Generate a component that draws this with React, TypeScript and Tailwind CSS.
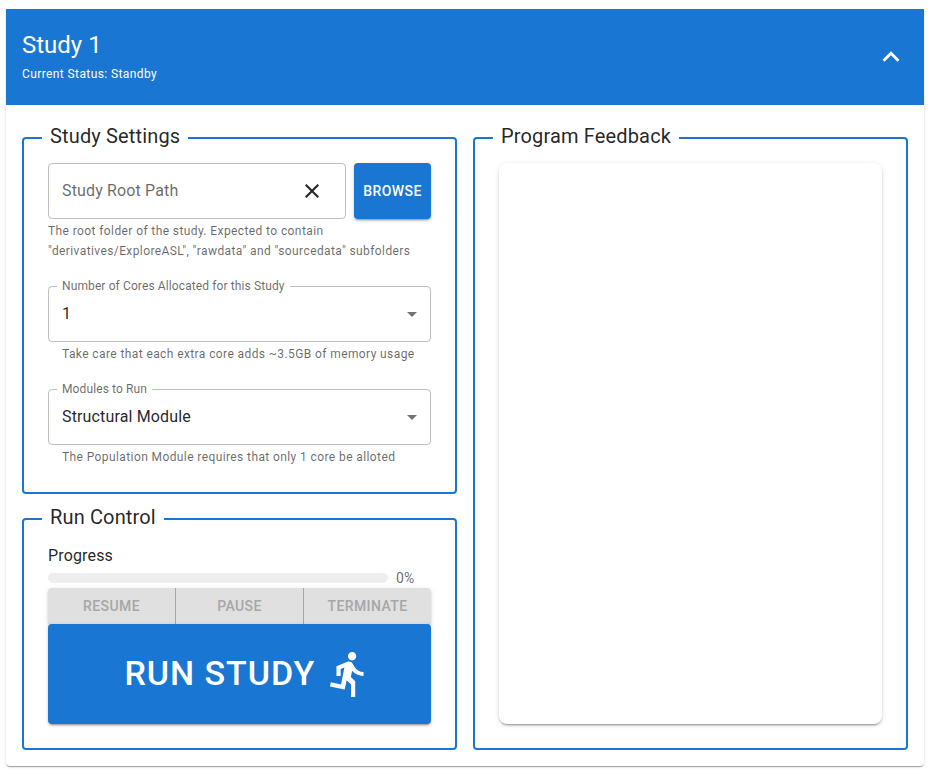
import type { ReactNode } from "react";
import { MdClose, MdDirectionsRun, MdExpandLess, MdArrowDropDown } from "react-icons/md";

function Section({ title, className, children }: { title: string; className: string; children: ReactNode }) {
  return (
    <fieldset className={`min-w-0 rounded border-2 border-[#1976d2] px-6 ${className}`}>
      <legend className="-ml-1.5 h-8 px-2 text-xl leading-7 tracking-[0.0075em]">{title}</legend>
      {children}
    </fieldset>
  );
}

function SelectField({ label, value, hint }: { label: string; value: string; hint: string }) {
  return (
    <div>
      <fieldset className="h-[66px] min-w-0 rounded border border-black/25 pr-1.5 pl-2">
        <legend className="h-5 pr-[5.2px] pl-[5px] text-xs leading-5 tracking-[0.00938em] text-black/60">{label}</legend>
        <div className="flex h-9 items-center justify-between pl-[5px]">
          <span className="text-base leading-6 tracking-[0.00938em]">{value}</span>
          <MdArrowDropDown className="size-6 text-black/55" />
        </div>
      </fieldset>
      <p className="mt-0.5 pl-3.5 text-xs leading-5 tracking-[0.03333em] text-black/60">{hint}</p>
    </div>
  );
}

const buttonText = "text-sm font-medium tracking-[0.02857em]";
const raised = "shadow-[0_3px_1px_-2px_rgba(0,0,0,0.2),0_2px_2px_0_rgba(0,0,0,0.14),0_1px_5px_0_rgba(0,0,0,0.12)]";
const paper = "shadow-[0_2px_1px_-1px_rgba(0,0,0,0.2),0_1px_1px_0_rgba(0,0,0,0.14),0_1px_3px_0_rgba(0,0,0,0.12)]";

export default function App() {
  return (
    <main className="h-[774px] w-[935px] bg-white pt-[9px] pl-1.5 font-[Roboto,sans-serif] text-black/87">
      <div className={`h-[757px] w-[918px] rounded-b ${paper}`}>
        <header className="flex h-24 items-center justify-between bg-[#1976d2] px-4 text-white">
          <div className="pb-0.5">
            <h1 className="text-2xl leading-8">Study 1</h1>
            <p className="mt-[3px] text-xs leading-5 tracking-[0.03333em]">Current Status: Standby</p>
          </div>
          <MdExpandLess className="size-[34px]" />
        </header>
        <div className="grid grid-cols-2 gap-4 px-4 pt-[17px]">
          <div className="flex flex-col gap-[9px]">
            <Section title="Study Settings" className="h-[372px] pt-[9px]">
              <div className="flex h-14 gap-2">
                <div className="flex flex-1 items-center justify-between rounded border border-black/25 pr-[21px] pl-[13px]">
                  <span className="text-base leading-6 tracking-[0.00938em] text-black/60">Study Root Path</span>
                  <MdClose className="size-6" />
                </div>
                <button className={`w-[77px] rounded bg-[#1976d2] text-white ${buttonText} ${raised}`}>BROWSE</button>
              </div>
              <p className="mt-0.5 mb-[15px] text-xs leading-5 tracking-[0.03333em] text-black/60">
                The root folder of the study. Expected to contain
                <br />
                "derivatives/ExploreAS<span className="tracking-[-0.13em]">L</span>", "rawdata" and "sourcedata" subfolders
              </p>
              <div className="flex flex-col gap-[15px]">
                <SelectField
                  label="Number of Cores Allocated for this Study"
                  value="1"
                  hint="Take care that each extra core adds ~3.5GB of memory usage"
                />
                <SelectField
                  label="Modules to Run"
                  value="Structural Module"
                  hint="The Population Module requires that only 1 core be alloted"
                />
              </div>
            </Section>
            <Section title="Run Control" className="h-[247px] pt-[9px]">
              <p className="text-base leading-6 tracking-[0.00938em]">Progress</p>
              <div className="mb-0.5 flex h-[18px] items-center gap-2 pt-0.5">
                <div className="h-2.5 w-[340px] rounded-full bg-[#eeeeee]" />
                <span className="text-sm leading-5 tracking-[0.01071em] text-black/60">0%</span>
              </div>
              <div className={`grid h-9 grid-cols-[128px_128px_1fr] divide-x divide-[#a6a6a6] rounded bg-[#e0e0e0] text-[#a6a6a6] ${buttonText} ${raised}`}>
                <button>RESUME</button>
                <button>PAUSE</button>
                <button>TERMINATE</button>
              </div>
              <button
                className={`relative flex h-[100px] w-full items-center justify-center gap-[8.7px] rounded bg-[#1976d2] pl-[19.3px] text-[34px] font-medium tracking-[0.02857em] text-white ${raised}`}
              >
                <span className="pb-0.5">RUN STUDY</span>
                <MdDirectionsRun className="size-[50px]" />
              </button>
            </Section>
          </div>
          <Section title="Program Feedback" className="h-[628px] pt-[9px]">
            <div className={`h-[561px] rounded-lg ${raised}`} />
          </Section>
        </div>
      </div>
    </main>
  );
}
